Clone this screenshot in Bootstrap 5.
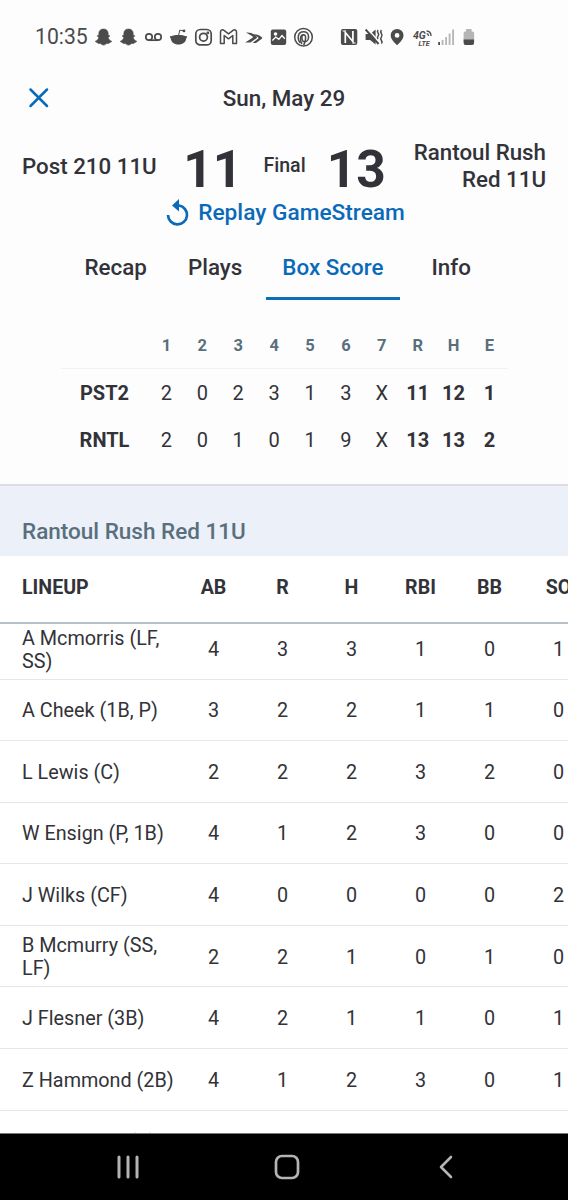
<!DOCTYPE html>
<html lang="en">
<head>
<meta charset="utf-8">
<meta name="viewport" content="width=device-width, initial-scale=1">
<title>Box Score</title>
<link href="https://cdn.jsdelivr.net/npm/bootstrap@5.3.0/dist/css/bootstrap.min.css" rel="stylesheet">
<style>
  body{font-family:Roboto,"Liberation Sans",sans-serif;color:#323338;background:#fdfdfe;font-size:20px;height:1200px;overflow:hidden}
  .fw-mid{font-weight:500}
  .statusbar{height:74px;padding:0 0 1px 35px;color:#4b4b4b}
  .clock{font-size:21.2px;width:56px}
  .statusbar svg{width:25px;height:24px;flex:none}
  .statusbar .sys{margin-left:21px}
  .statusbar .sys svg{width:24.2px}
  .topbar{height:50px;padding:0 27px}
  .topbar .date{font-size:22.4px}
  .score{height:75px;padding:9px 22px 0;font-size:22.3px;line-height:27px}
  .score .pts{font-size:51.5px;font-weight:700;line-height:1;margin-top:7px}
  .score .final{font-size:19.6px;margin-top:-2px}
  .score .middle{gap:21px;padding-left:1px}
  .team{width:136px}
  .replay{height:29px;color:#0a6ab9;font-size:22.7px;padding-left:2px}
  .tabs-row{height:72px;font-size:22.4px;padding-left:67px;gap:6px}
  .tabs-row .nav-link{color:#323338;padding:0 17.5px;height:72px;line-height:79px;border-bottom:3px solid transparent}
  .tabs-row .nav-link.active{color:#0a6ab9;border-color:#0a6fb4;padding:0 16.5px}
  .innings{width:447px;margin:24px 0 0 60.5px;table-layout:fixed;border-collapse:collapse;text-align:center}
  .innings th,.innings td{padding:0}
  .innings thead th{height:44px;font-size:16.5px;color:#596f7c;border-bottom:1.5px solid #eef2f6;padding-top:1px}
  .innings tbody tr{height:46px}
  .innings tbody tr:first-child{height:49px}
  .section-head{height:72px;margin-top:21px;background:#ebf0f9;border-top:2px solid #dcdee3;color:#596f7c;font-size:22.5px;padding:32px 22px 0}
  .lineup{width:593px;table-layout:fixed;border-collapse:collapse;text-align:center;background:#fff;font-size:19.8px}
  .lineup th,.lineup td{padding:0;line-height:23px}
  .lineup th:first-child,.lineup td:first-child{text-align:left;padding-left:22px}
  .lineup thead th{height:67px;font-size:19.6px;padding-bottom:3px;border-bottom:2px solid #b9c1c8}
  .lineup tbody td{height:61.6px;padding-top:2px;border-bottom:1.5px solid #e6e7ea}
  .lineup tbody tr:first-child td{height:56px;padding-bottom:5px}
  .lineup tbody tr:first-child td + td{padding-bottom:5px}
  .lineup tbody tr:last-child td{padding-top:4px}
  .stats{height:577px;overflow:hidden}
  .navkeys{height:67px;background:#000;border-top:1px solid #777;padding:0 42.5px 0 48.5px}
</style>
</head>
<body>
<div class="statusbar d-flex align-items-center">
  <span class="clock">10:35</span>
  <svg viewBox="0 0 25 24" fill="currentColor"><path id="ghost" d="M12.500 4c3 0 4.700 2 4.700 4.600v2l1.400-.1c.3 1-1 1.500-1.400 1.900.4 2 1.900 3.200 3.500 3.800-.2 1-1.600 1.100-2.200 1.300-.3.700-.2 1-1 1-1 0-1.800-.2-2.700.6-1.500 1.300-3.100 1.300-4.600 0-.9-.8-1.700-.6-2.700-.6-.8 0-.7-.3-1-1-.6-.2-2-.3-2.200-1.300 1.600-.6 3.100-1.800 3.500-3.800-.4-.4-1.700-.9-1.400-1.900l1.400.1v-2C7.800 6 9.500 4 12.500 4z" stroke="currentColor" stroke-width=".6"/></svg>
  <svg viewBox="0 0 25 24" fill="currentColor"><use href="#ghost"/></svg>
  <svg viewBox="0 0 25 24" fill="none" stroke="currentColor" stroke-width="1.700"><circle cx="8" cy="12" r="3.200"/><circle cx="17" cy="12" r="3.200"/><path d="M8 15.200h9"/></svg>
  <svg viewBox="0 0 25 24" fill="currentColor"><path d="M5.500 11.200c2-1.700 12-1.700 14 0 1.500-.6 2.200 1 .8 2C20 17 17 19.500 12.500 19.500S5 17 4.700 13.200c-1.400-1-.7-2.600.8-2z"/><path d="M12.700 10l1-4.800 4 .6" fill="none" stroke="currentColor" stroke-width="1"/><circle cx="18" cy="5.900" r="1.400"/></svg>
  <svg viewBox="0 0 25 24" fill="none" stroke="currentColor" stroke-width="1.700"><rect x="4.800" y="4.500" width="15.400" height="15.400" rx="4.500"/><circle cx="12.500" cy="12.200" r="3.900"/><circle cx="16.800" cy="7.900" r=".6"/></svg>
  <svg viewBox="0 0 25 24" fill="none" stroke="currentColor" stroke-width="1.500" stroke-linejoin="round"><path d="M4.500 18.500V7c0-2 2-2.700 3.500-1.600l4.500 3.500L17 5.400c1.500-1.100 3.500-.4 3.500 1.600v11.500h-3.700v-8l-4.300 3.300-4.300-3.300v8z"/></svg>
  <svg viewBox="0 0 25 24" fill="currentColor"><path d="M5 7.500c4-.2 6 .5 8.500 2.300l2 1.700c.8.800.5 1.400-.3 1.900L9.500 17.500H4.200l7.300-4.700c.7-.5.500-1-.1-1.500z"/><path d="M12.500 9.300c3.500-.2 5.500 1 8 2.600 1 .7 1 1.400 0 2.100L15 18h-3.500l5.500-4.200c.6-.5.6-1 0-1.500z"/></svg>
  <svg viewBox="0 0 25 24"><rect x="4.800" y="4.600" width="15.400" height="15.400" rx="2" fill="currentColor"/><circle cx="9.500" cy="9" r="1.800" fill="#fff"/><path d="M6.300 15.500l3.500-3.500 3 2.300 3.200-3.800 2.800 3.200" fill="none" stroke="#fff" stroke-width="1.300"/></svg>
  <svg viewBox="0 0 25 24" fill="none" stroke="currentColor" stroke-width="1.500"><circle cx="12.500" cy="12.200" r="8.800"/><path d="M9.500 18C6 14.500 6.200 6.800 12.500 6.800c6.700 0 6.500 9.600 1 10-3 .1-3.600-6.500-1-7 3-.3 2.600 5.500.2 10.500"/><path d="M11 19c-2.500-3.500-2-9.300 1.500-9.300"/></svg>
  <div class="sys d-flex">
    <svg viewBox="0 0 24 24"><rect x="3.800" y="4" width="16.400" height="16" rx="2" fill="currentColor"/><path d="M8.200 18V7.500l7.600 9V6" fill="none" stroke="#fff" stroke-width="1.700"/><path d="M5.500 6h3.500M15 18h3.500" stroke="#fff"/></svg>
    <svg viewBox="0 0 24 24" fill="none" stroke="currentColor"><path d="M4.500 9h4.500l5.500-4.500v15L9 15H4.500z" fill="currentColor" stroke="none"/><path d="M6.500 4l10 11" stroke="#fff" stroke-width="1.500"/><path d="M4.500 4.500l13 14.500" stroke-width="1.900"/><path d="M17 5q-1.300 1.500 0 3t0 3 0 3M20.300 5q-1.300 1.700 0 3.500t0 3.500 0 3.500 0 3" stroke-width="1.500"/></svg>
    <svg viewBox="0 0 24 24" fill="currentColor"><path fill-rule="evenodd" d="M12 4a6.400 6.400 0 0 1 6.400 6.400C18.400 15 12 20 12 20s-6.400-5-6.400-9.600A6.400 6.400 0 0 1 12 4zm0 4a2.400 2.400 0 1 0 0 4.800A2.400 2.400 0 0 0 12 8z"/></svg>
    <svg viewBox="0 0 24 24" fill="currentColor" font-family="Roboto,sans-serif" font-weight="700" font-style="italic"><text x="2.800" y="14.200" font-size="10.500">4G</text><text x="8.500" y="20.500" font-size="7">LTE</text><path d="M16.500 6q4.300.3 4.500 5M16.500 8.700q1.800.2 2 2.300" fill="none" stroke="currentColor" stroke-width="1.300"/></svg>
    <svg viewBox="0 0 24 24" stroke="#b5b5b5" stroke-width="1.800"><path d="M8.500 20v-5M12 20v-8M15.500 20V8.500M19 20V4.500"/><path d="M5 20v-3" stroke="#4b4b4b"/></svg>
    <svg viewBox="0 0 24 24"><path d="M5.500 16V8q0-1.500 1.500-1.500h1V4h5.500v2.500h1q1.500 0 1.500 1.500v8z" fill="#b5b5b5"/><path d="M5.500 14.500h10.500V18q0 2-2 2H7.500q-2 0-2-2z" fill="#4b4b4b"/></svg>
  </div>
</div>

<header class="topbar d-flex align-items-center">
  <svg width="24" height="24" viewBox="0 0 24 24" stroke="#0a6ab9" stroke-width="2.500" stroke-linecap="round"><path d="M3.500 2.500l16.500 16.500M20 2.500L3.500 19"/></svg>
  <span class="date fw-mid flex-grow-1 text-center pe-4">Sun, May 29</span>
</header>

<section class="score d-flex align-items-center justify-content-between fw-mid">
  <span class="team text-nowrap">Post 210 11U</span>
  <div class="middle d-flex align-items-center">
    <span class="pts">11</span>
    <span class="final">Final</span>
    <span class="pts">13</span>
  </div>
  <span class="team text-end text-nowrap">Rantoul Rush<br>Red 11U</span>
</section>
<div class="replay d-flex align-items-center justify-content-center fw-mid gap-2">
  <svg width="25" height="29" viewBox="0 0 25 29" fill="none" stroke="currentColor" stroke-width="2.700"><path d="M12 6.500h2A9.500 9.500 0 1 1 3 16"/><path d="M14 0v12.500L7 6.500z" fill="currentColor" stroke="none"/></svg>
  <span>Replay GameStream</span>
</div>

<nav class="tabs-row nav flex-nowrap fw-mid">
  <a class="nav-link">Recap</a><a class="nav-link">Plays</a><a class="nav-link active text-nowrap">Box Score</a><a class="nav-link ms-2">Info</a>
</nav>

<table class="innings">
  <colgroup><col style="width:88px"></colgroup>
  <thead><tr><th></th><th>1</th><th>2</th><th>3</th><th>4</th><th>5</th><th>6</th><th>7</th><th>R</th><th>H</th><th>E</th></tr></thead>
  <tbody>
    <tr><th>PST2</th><td>2</td><td>0</td><td>2</td><td>3</td><td>1</td><td>3</td><td>X</td><th>11</th><th>12</th><th>1</th></tr>
    <tr><th>RNTL</th><td>2</td><td>0</td><td>1</td><td>0</td><td>1</td><td>9</td><td>X</td><th>13</th><th>13</th><th>2</th></tr>
  </tbody>
</table>

<h2 class="section-head mb-0 fw-mid">Rantoul Rush Red 11U</h2>
<div class="stats">
<table class="lineup">
  <colgroup><col style="width:179px"><col span="6" style="width:69px"></colgroup>
  <thead><tr><th>LINEUP</th><th>AB</th><th>R</th><th>H</th><th>RBI</th><th>BB</th><th>SO</th></tr></thead>
  <tbody>
    <tr><td>A Mcmorris (LF,<br>SS)</td><td>4</td><td>3</td><td>3</td><td>1</td><td>0</td><td>1</td></tr>
    <tr><td>A Cheek (1B, P)</td><td>3</td><td>2</td><td>2</td><td>1</td><td>1</td><td>0</td></tr>
    <tr><td>L Lewis (C)</td><td>2</td><td>2</td><td>2</td><td>3</td><td>2</td><td>0</td></tr>
    <tr><td>W Ensign (P, 1B)</td><td>4</td><td>1</td><td>2</td><td>3</td><td>0</td><td>0</td></tr>
    <tr><td>J Wilks (CF)</td><td>4</td><td>0</td><td>0</td><td>0</td><td>0</td><td>2</td></tr>
    <tr><td>B Mcmurry (SS,<br>LF)</td><td>2</td><td>2</td><td>1</td><td>0</td><td>1</td><td>0</td></tr>
    <tr><td>J Flesner (3B)</td><td>4</td><td>2</td><td>1</td><td>1</td><td>0</td><td>1</td></tr>
    <tr><td>Z Hammond (2B)</td><td>4</td><td>1</td><td>2</td><td>3</td><td>0</td><td>1</td></tr>
    <tr><td>A Mcdowell (P)</td><td></td><td></td><td></td><td></td><td></td><td></td></tr>
  </tbody>
</table>
</div>
<footer class="navkeys d-flex align-items-center justify-content-around">
  <svg width="26" height="26" viewBox="0 0 26 26" stroke="#b4b4b4" stroke-width="3" stroke-linecap="round"><path d="M4 3v20M13 3v20M22 3v20"/></svg>
  <svg width="26" height="26" viewBox="0 0 26 26" fill="none" stroke="#b4b4b4" stroke-width="2.700"><rect x="2" y="2" width="22" height="22" rx="6"/></svg>
  <svg width="26" height="26" viewBox="0 0 26 26" fill="none" stroke="#b4b4b4" stroke-width="2.600" stroke-linecap="round" stroke-linejoin="round"><path d="M18 3L8 13l10 10"/></svg>
</footer>
<script src="https://cdn.jsdelivr.net/npm/bootstrap@5.3.0/dist/js/bootstrap.bundle.min.js"></script>
</body>
</html>
